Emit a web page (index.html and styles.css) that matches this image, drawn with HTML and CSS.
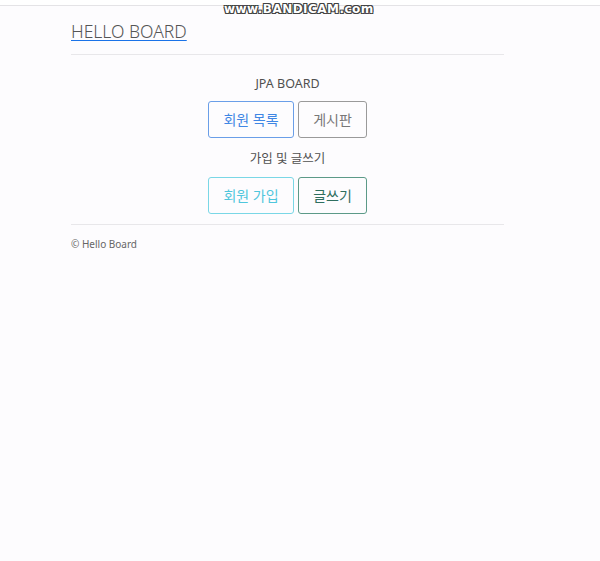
FILE: index.html
```html
<!DOCTYPE html>
<html lang="ko">
<head>
<meta charset="utf-8">
<title>Hello Board</title>
<link rel="stylesheet" href="styles.css">
</head>
<body>
<div class="topbar"></div>
<div class="watermark">www.BANDICAM.com</div>
<div class="container">
  <header class="header">
    <a class="brand" href="#">HELLO BOARD</a>
  </header>
  <main class="main">
    <p class="label">JPA BOARD</p>
    <div class="btn-row">
      <a class="btn btn-primary" href="#">회원 목록</a>
      <a class="btn btn-secondary" href="#">게시판</a>
    </div>
    <p class="label">가입 및 글쓰기</p>
    <div class="btn-row">
      <a class="btn btn-info" href="#">회원 가입</a>
      <a class="btn btn-success" href="#">글쓰기</a>
    </div>
  </main>
  <footer class="footer">© Hello Board</footer>
</div>
</body>
</html>
```
FILE: styles.css
```css
html, body {
  margin: 0;
  padding: 0;
  background: #fdfcfe;
  font-family: "Noto Sans", "Noto Sans CJK KR", sans-serif;
  color: #555;
}
.topbar {
  height: 5px;
  background: #fff;
  border-bottom: 1px solid #e4e3e6;
}
.watermark {
  position: absolute;
  top: 2px;
  left: 224px;
  font-family: "DejaVu Sans", sans-serif;
  font-weight: bold;
  font-size: 12px;
  letter-spacing: 0.45px;
  color: #fff;
  text-shadow: 0 0 1px #333, 1px 1px 0 #444, -1px -1px 0 #444, 1px -1px 0 #444, -1px 1px 0 #444;
}
.container {
  width: 433px;
  margin-left: 71px;
}
.header {
  padding-top: 13px;
  padding-bottom: 11px;
  border-bottom: 1px solid #e8e7ea;
}
.brand {
  font-size: 17.5px;
  font-weight: 300;
  color: #555;
  text-decoration: underline;
  text-decoration-color: #1a73e8;
  text-underline-offset: 2px;
}
.main {
  display: flex;
  flex-direction: column;
  align-items: center;
  padding-top: 20px;
  padding-bottom: 10px;
  border-bottom: 1px solid #e8e7ea;
}
.label {
  margin: 0 0 8px;
  font-size: 12.5px;
  line-height: 18px;
  color: #505050;
}
.btn-row {
  display: flex;
  gap: 4px;
  margin-bottom: 12px;
}
.btn-row:last-child { margin-bottom: 0; }
.btn-row + .label { margin-bottom: 9px; }
.btn {
  display: block;
  box-sizing: border-box;
  height: 37px;
  line-height: 35px;
  padding: 0 14px;
  border: 1px solid;
  border-radius: 3px;
  font-size: 14px;
  text-decoration: none;
  text-align: center;
}
.btn-primary { color: #3f86e4; border-color: #6a9ee8; width: 86px; }
.btn-secondary { color: #777; border-color: #9a9a9a; width: 69px; }
.btn-info { color: #4fc6dc; border-color: #7ad7e6; width: 86px; }
.btn-success { color: #2f6f5f; border-color: #5c9a88; width: 69px; }
.footer {
  padding-top: 12px;
  font-size: 10px;
  line-height: 15px;
  color: #666;
}
```
